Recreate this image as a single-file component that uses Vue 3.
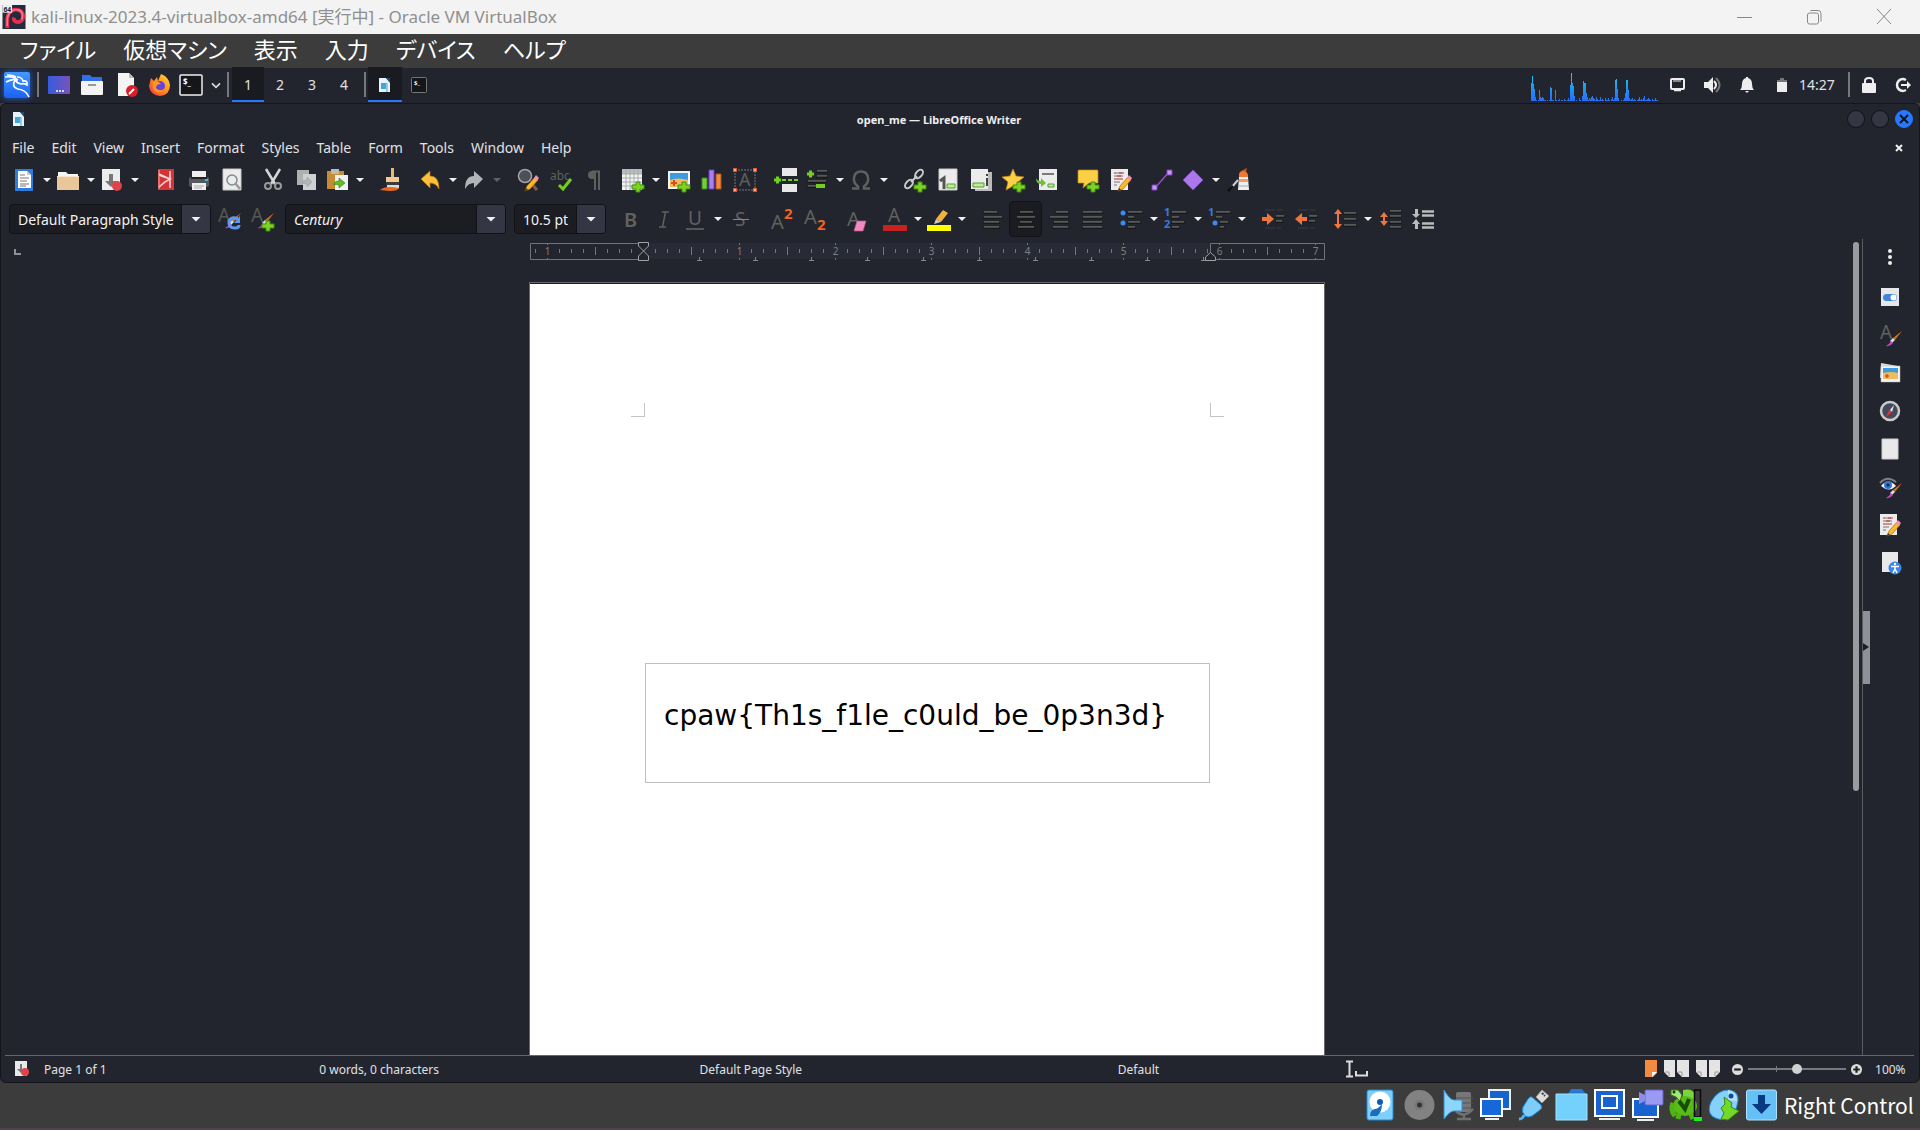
<template>
  <div class="screen">
    <header class="vm-title">
      <svg class="i24" viewBox="0 0 24 25" v-html="art.debian"></svg>
      <span class="vm-name">kali-linux-2023.4-virtualbox-amd64 [実行中] - Oracle VM VirtualBox</span>
      <div class="vm-controls">
        <button v-for="c in vmControls" :key="c" :aria-label="c">
          <svg class="i20" viewBox="0 0 20 20" v-html="art[c]"></svg>
        </button>
      </div>
    </header>

    <nav class="vm-menu">
      <button v-for="m in vmMenus" :key="m">{{ m }}</button>
    </nav>

    <div class="panel">
      <button class="kali" aria-label="Applications">
        <svg viewBox="0 0 26 26" v-html="art.kali"></svg>
      </button>
      <i class="bar"></i>
      <div class="launchers">
        <button v-for="l in launchers" :key="l" :aria-label="l">
          <svg class="i24" viewBox="0 0 24 24" v-html="art[l]"></svg>
        </button>
        <button class="more" aria-label="More terminals">
          <svg viewBox="0 0 10 10" width="8" height="8"><path d="M0 3l5 5 5-5" fill="none" stroke="#ddd" stroke-width="2" /></svg>
        </button>
      </div>
      <i class="bar"></i>
      <div class="spaces">
        <button v-for="n in 4" :key="n" :class="{ on: n === workspace }" @click="workspace = n">{{ n }}</button>
      </div>
      <i class="bar"></i>
      <div class="tasks">
        <button class="on" aria-label="open_me — LibreOffice Writer">
          <svg class="i16" viewBox="0 0 16 16" v-html="art.writer"></svg>
        </button>
        <button aria-label="Terminal">
          <svg class="i16" viewBox="0 0 16 16" v-html="art.miniTerm"></svg>
        </button>
      </div>
      <svg class="cpu" viewBox="0 0 128 28">
        <defs>
          <linearGradient id="cpuFill" x1="0" y1="0" x2="0" y2="28" gradientUnits="userSpaceOnUse">
            <stop offset="0" stop-color="#19d4f5" />
            <stop offset="0.5" stop-color="#1a9cf8" />
            <stop offset="1" stop-color="#2a6cf6" />
          </linearGradient>
        </defs>
        <rect v-for="(h, i) in load" :key="i" :x="i" :y="28 - h" width="1" :height="h" fill="url(#cpuFill)" />
      </svg>
      <div class="tray">
        <button v-for="t in tray" :key="t" :aria-label="t">
          <svg class="i20" viewBox="0 0 20 20" v-html="art[t]"></svg>
        </button>
      </div>
      <time class="clock">14:27</time>
      <i class="bar"></i>
      <div class="session">
        <button v-for="t in ['lock', 'logout']" :key="t" :aria-label="t">
          <svg class="i20" viewBox="0 0 20 20" v-html="art[t]"></svg>
        </button>
      </div>
    </div>

    <section class="window">
      <div class="titlebar">
        <svg class="i16" viewBox="0 0 16 16" v-html="art.writer"></svg>
        <h1>open_me — LibreOffice Writer</h1>
        <div class="win-controls">
          <button aria-label="Minimize"></button>
          <button aria-label="Maximize"></button>
          <button class="close" aria-label="Close">
            <svg viewBox="0 0 8 8" width="8" height="8"><path d="M0 0l8 8M8 0l-8 8" stroke="#10131c" stroke-width="2" /></svg>
          </button>
        </div>
      </div>

      <nav class="menubar">
        <button v-for="m in menus" :key="m">{{ m }}</button>
        <button class="doc-close" aria-label="Close document">
          <svg viewBox="0 0 8 8" width="8" height="8"><path d="M1 1l6 6M7 1l-6 6" stroke="#eee" stroke-width="2" /></svg>
        </button>
      </nav>

      <div class="toolbar standard">
        <template v-for="(t, i) in standard" :key="i">
          <i v-if="t === '|'" class="sep"></i>
          <button v-else class="tool" :class="{ split: t.endsWith('+') }" :aria-label="name(t)">
            <svg class="i24" viewBox="0 0 24 24" v-html="art[name(t)]"></svg>
            <b v-if="t.endsWith('+')" class="arrow" :class="{ dim: t === 'redo+' }"></b>
          </button>
        </template>
      </div>

      <div class="toolbar formatting">
        <div class="combo style-box">
          <select aria-label="Paragraph style"><option>Default Paragraph Style</option></select>
          <span><b class="arrow big"></b></span>
        </div>
        <button class="tool" aria-label="Update style"><svg class="i24" viewBox="0 0 24 24" v-html="art.updateStyle"></svg></button>
        <button class="tool" aria-label="New style"><svg class="i24" viewBox="0 0 24 24" v-html="art.newStyle"></svg></button>
        <div class="combo font-box">
          <select aria-label="Font name"><option>Century</option></select>
          <span><b class="arrow big"></b></span>
        </div>
        <div class="combo size-box">
          <select aria-label="Font size"><option>10.5 pt</option></select>
          <span><b class="arrow big"></b></span>
        </div>
        <template v-for="(t, i) in formatting" :key="i">
          <i v-if="t === '|'" class="sep"></i>
          <button v-else class="tool" :class="{ split: t.endsWith('+'), pressed: t === 'alignCenter' }" :aria-label="name(t)">
            <svg class="i24" viewBox="0 0 24 24" v-html="art[name(t)]"></svg>
            <b v-if="t.endsWith('+')" class="arrow"></b>
          </button>
        </template>
      </div>

      <div class="workspace">
        <div class="canvas">
          <div class="ruler-row">
            <svg class="tab-kind" viewBox="0 0 7 6"><path d="M1 0V5H7" fill="none" stroke="#8d8f93" stroke-width="2" /></svg>
            <svg class="ruler" viewBox="0 0 796 20">
              <rect x="114" y="1" width="567" height="16" fill="#282b35" />
              <path d="M114 1.500H1.500V17.500H114M681.500 17.500H795.500V1.500H681.500V17" fill="none" stroke="#707279" />
              <path :d="ticks" stroke="#75777d" />
              <path :d="tabs" stroke="#85878c" />
              <text v-for="n in rulerNumbers" :key="n.x" :x="n.x" y="13">{{ n.label }}</text>
              <path d="M109.500 .5H119.500V4L109.500 14V18.500H119.500V14L109.500 4Z" fill="#23252e" stroke="#a0a1a5" />
              <path d="M676.500 18.500H686.500V15L681.500 10.500L676.500 15Z" fill="#23252e" stroke="#a0a1a5" />
            </svg>
          </div>
          <article class="page">
            <div class="marks"><i></i><i></i></div>
            <div class="frame"><p>cpaw{Th1s_f1le_c0uld_be_0p3n3d}</p></div>
          </article>
        </div>
        <div class="scroll"><div class="thumb"></div></div>
        <aside class="sidebar">
          <button class="handle" aria-label="Hide sidebar">
            <svg viewBox="0 0 6 8" width="6" height="8"><path d="M0 0L6 4L0 8Z" fill="#1d1f26" /></svg>
          </button>
          <div class="decks">
            <button v-for="d in decks" :key="d" :aria-label="d">
              <svg class="i24" viewBox="0 0 24 24" v-html="art[d]"></svg>
            </button>
          </div>
        </aside>
      </div>

      <footer class="status">
        <svg class="i16" viewBox="0 0 16 16" v-html="art.modified"></svg>
        <span class="s-page">Page 1 of 1</span>
        <span class="s-words">0 words, 0 characters</span>
        <span class="s-style">Default Page Style</span>
        <span class="s-lang">Default</span>
        <svg class="s-mode" viewBox="0 0 22 18"><path d="M0 1.500H7M0 16.500H7M3.500 1V17" stroke="#ddd" stroke-width="2" /><path d="M10 11V15.500H21V11" fill="none" stroke="#ddd" stroke-width="2" /></svg>
        <div class="views">
          <button aria-label="Single page"><svg width="12" height="18" viewBox="0 0 12 18"><path d="M0 0H12V13L8 17H0Z" fill="#f48a41" /><path d="M12 12L7 17V12Z" fill="#fff" /></svg></button>
          <button aria-label="Multiple pages"><svg width="25" height="18" viewBox="0 0 25 18"><path d="M0 0H11V17H5L0 12ZM13 0H25V17H18L13 12Z" fill="#e4e4e4" /><path d="M1 12H5V16M14 12H18V16" stroke="#999" fill="none" /></svg></button>
          <button aria-label="Book view"><svg width="24" height="18" viewBox="0 0 24 18"><path d="M0 0H11V17H5L0 12ZM13 0H24V12L19 17H13Z" fill="#e4e4e4" /><path d="M1 12H5V16M23 12H19V16" stroke="#999" fill="none" /></svg></button>
        </div>
        <button class="zoom-btn" aria-label="Zoom out"><svg viewBox="0 0 10 10"><circle cx="5" cy="5" r="5" fill="#ddd" /><path d="M2 5H8" stroke="#222" stroke-width="2" /></svg></button>
        <input v-model="zoom" class="zoom" type="range" min="0" max="100" aria-label="Zoom" />
        <button class="zoom-btn" aria-label="Zoom in"><svg viewBox="0 0 10 10"><circle cx="5" cy="5" r="5" fill="#ddd" /><path d="M2 5H8M5 2V8" stroke="#222" stroke-width="2" /></svg></button>
        <span class="s-zoom">100%</span>
      </footer>
    </section>

    <footer class="vm-status">
      <button v-for="d in devices" :key="d" :aria-label="d">
        <svg viewBox="0 0 31 32" v-html="art[d]"></svg>
      </button>
      <span>Right Control</span>
    </footer>
  </div>
</template>

<script setup>
import { ref } from "vue";

const workspace = ref(1);
const zoom = ref(50);

const vmControls = ["minimize", "restore", "closeVm"];
const vmMenus = ["ファイル", "仮想マシン", "表示", "入力", "デバイス", "ヘルプ"];
const launchers = ["desktop", "files", "editor", "firefox", "terminal"];
const tray = ["network", "volume", "bell", "battery"];
const menus = ["File", "Edit", "View", "Insert", "Format", "Styles", "Table", "Form", "Tools", "Window", "Help"];
const decks = ["dots", "properties", "styles", "gallery", "navigator", "pageDeck", "inspector", "trackChanges", "a11y"];
const devices = ["hdd", "disc", "audio", "nic", "usb", "shared", "display", "record", "cpu", "mouse", "hostkey"];

// a trailing + marks a button with a drop-down arrow
const standard = [
  "newDoc+", "open+", "save+", "|", "pdf", "print", "preview", "|", "cut", "copy", "paste+", "|",
  "brush", "|", "undo+", "redo+", "|", "find", "spell", "pilcrow", "|", "table+", "image", "chart",
  "textbox", "|", "pageBreak", "field+", "omega+", "|", "link", "footnote", "endnote", "bookmark",
  "crossref", "|", "comment", "trackChanges", "|", "line", "shapes+", "drawTools",
];
const formatting = [
  "bold", "italic", "underline+", "strike", "|", "superscript", "subscript", "|", "clear", "|",
  "fontColor+", "highlight+", "|", "alignLeft", "alignCenter", "alignRight", "justify", "|",
  "bullets+", "numbering+", "outline+", "|", "indent", "outdent", "|", "spacing+", "paraMore", "paraLess",
];
const name = (t) => t.replace("+", "");

// cpu graph, one value per pixel column
const load = [
  18, 25, 17, 12, 4, 1, 0, 1, 11, 4, 3, 4, 3, 1, 1, 0, 1, 0, 1, 14, 13, 1, 1, 0, 11, 1, 0, 1, 2, 0,
  1, 1, 0, 2, 1, 0, 1, 3, 1, 16, 28, 18, 15, 5, 0, 1, 0, 0, 3, 1, 0, 5, 20, 18, 18, 8, 4, 1, 3, 2,
  4, 5, 3, 2, 1, 4, 2, 1, 1, 4, 1, 2, 1, 0, 3, 1, 1, 3, 1, 0, 2, 4, 1, 3, 21, 22, 12, 3, 0, 0, 1, 0,
  1, 3, 8, 21, 21, 11, 3, 1, 2, 3, 1, 2, 1, 0, 1, 2, 4, 1, 2, 1, 3, 5, 1, 1, 2, 3, 2, 1, 0, 2, 1, 1, 3, 1, 1, 0,
];

const zero = 114;
let ticks = "";
const rulerNumbers = [];
for (let i = -9; i <= 56; i++) {
  if (i === 0) continue;
  const x = zero + i * 12 + 0.5;
  if (i % 8 === 0) {
    ticks += `M${x} 1v2M${x} 16v2`;
    rulerNumbers.push({ x: x, label: Math.abs(i / 8) });
  } else if (i % 4 === 0) {
    ticks += `M${x} 5v8`;
  } else {
    ticks += `M${x} 7v4`;
  }
}
let tabs = "";
for (let i = 1; i <= 10; i++) {
  const x = zero + i * 56 + 0.5;
  tabs += `M${x} 15v3M${x - 2.5} 18.5h5`;
}

const plus = '<path d="M15 14h4v3h4v4h-4v3h-4v-3h-4v-4h4z" fill="#7ed321" stroke="#3c9010"/>';
const sheet = '<path d="M3 1h18v21H3z" fill="#ececec" stroke="#c9c9c9"/>';
const pencil = '<path d="M9 23l2-5 8-9 3 3-8 9z" fill="#fbb92e" stroke="#a8660c" stroke-width=".7"/><path d="M18 10l2-3 3 3-2 3z" fill="#f48fb1"/><path d="M9 23l1-3 2 2z" fill="#333"/>';
const brushTip = '<path d="M23 6l-7 9-2-2z" fill="#d0701c"/><path d="M16 15l-2-2-3 3 2 2z" fill="#ddd"/><path d="M12 16l2 2q-3 4-7 3 3-1 5-5z" fill="#c247c0"/>';
const letter = (t, x, y, size, fill, extra = "") =>
  `<text x="${x}" y="${y}" font-size="${size}" fill="${fill}" font-family="Noto Sans, sans-serif" ${extra}>${t}</text>`;
const rules = (list, color = "#65675f") =>
  list.map(([x, y, w]) => `<path d="M${x} ${y}h${w}" stroke="${color}" stroke-width="1.6"/><path d="M${x - 1} ${y + 1.3}h${w + 2}" stroke="#15161a"/>`).join("");

const art = {
  debian: '<path d="M0 0h24v25H0z" fill="#242b3b"/><path d="M5 24V16C5 7 11 4 16 5c6 1 7 9 3 12-4 2-8 0-7-4" fill="none" stroke="#e62f50" stroke-width="4"/><path d="M5 22V16C5 8 11 4 16 5c5 1 6 6 4 10" fill="none" stroke="#ff7f90" stroke-width="1.500"/><path d="M0 0h10v8H0z" fill="#eee"/>' + letter("64", 1, 7, 7, "#222", 'font-weight="700"'),
  minimize: '<path d="M2 10.500h15" stroke="#888"/>',
  restore: '<rect x="2.500" y="6" width="11" height="11" rx="2" fill="none" stroke="#888"/><path d="M5.500 3.500h7.500q3 0 3 3v8" fill="none" stroke="#888"/>',
  closeVm: '<path d="M2 2l14 15M16 2L2 17" stroke="#888"/>',
  kali: '<defs><linearGradient id="kaliBg" x2="0" y2="1"><stop stop-color="#4399ff"/><stop offset="1" stop-color="#1b61f2"/></linearGradient></defs><rect width="26" height="26" rx="2" fill="url(#kaliBg)"/><path d="M1 5q7-1 12 2M2 10q7-4 12-2M3 3q6 0 9 2M13 5q5 0 6 4 5-1 4 4-3-2-6-1-5-1-6-5M11 8q-4 7 3 9 8 1 11 8" fill="none" stroke="#fff" stroke-width="1.6"/>',
  desktop: '<defs><linearGradient id="desk"><stop stop-color="#355ce0"/><stop offset="1" stop-color="#7a52b8"/></linearGradient></defs><rect x="1" y="3" width="22" height="18" rx="1" fill="url(#desk)"/><path d="M9 18h2m1 0h2m1 0h2" stroke="#fff" stroke-width="1.5"/>',
  files: '<path d="M2 2h8l2 2h10v6H2z" fill="#2f6fe8"/><rect x="1" y="8" width="22" height="14" rx="1" fill="#f3f3f3"/><path d="M8 12h8" stroke="#999" stroke-width="2"/>',
  editor: '<path d="M5 0h11l5 5v18H5z" fill="#f4f4f4"/><path d="M16 0v5h5z" fill="#bbb"/><circle cx="19" cy="18" r="6" fill="#d81f2a"/><path d="M16 21l5-5" stroke="#fff" stroke-width="2"/>',
  firefox: '<defs><linearGradient id="fox" x1="1" x2="0" y2="1"><stop stop-color="#ffdf3a"/><stop offset=".5" stop-color="#ff8a1e"/><stop offset="1" stop-color="#f0304a"/></linearGradient></defs><path d="M4 9l1-4 3 3 3-4 1 4 3-7q8 3 9 11 0 10-10 11Q4 22 3 13z" fill="url(#fox)"/><circle cx="14" cy="13" r="5" fill="#6b42d8"/><path d="M7 9q5-2 8 2-5 0-5 4 3 4 8 1-3 5-8 3-5-4-3-10z" fill="#ff9a20"/>',
  terminal: '<rect x="1" y="2" width="22" height="20" rx="1" fill="#151619" stroke="#eee" stroke-width="1.500"/>' + letter("$_", 4, 12, 8, "#fff", 'font-weight="700"'),
  miniTerm: '<rect x=".5" y=".5" width="15" height="15" rx="1" fill="#151619" stroke="#777"/>' + letter("$_", 3, 8, 6, "#fff", 'font-weight="700"'),
  writer: '<path d="M2 1h7l4 4v10H2z" fill="#e8f4fb"/><path d="M9 1h4v5z" fill="#1d4b7c"/><rect x="4" y="6" width="6" height="6" fill="#42a5dc"/><path d="M11 6v9H9V7z" fill="#8ccbee"/>',
  network: '<rect x="4" y="4" width="13" height="10" rx="1" fill="none" stroke="#eee" stroke-width="2"/><path d="M7 4v3M9 4v3M11 4v3M13 4v3" stroke="#eee"/><path d="M7 15.500h7" stroke="#eee" stroke-width="1.500"/>',
  volume: '<path d="M2 7h4l5-5v16l-5-5H2z" fill="#eee"/><path d="M12 6q4 4 0 8" fill="none" stroke="#eee" stroke-width="2"/><path d="M14 3q7 7 0 14" fill="none" stroke="#777" stroke-width="2"/>',
  bell: '<path d="M3 15q2-2 2-6 0-5 4-6V2h2v1q4 1 4 6 0 4 2 6z" fill="#eee"/><path d="M8 16h4l-2 2z" fill="#eee"/>',
  battery: '<path d="M8 3h4v2h3v2H5V5h3z" fill="#777"/><path d="M5 7h10v10H5z" fill="#eee"/>',
  lock: '<rect x="3" y="8" width="14" height="10" rx="1" fill="#eee"/><path d="M6 9V6q0-3 4-3t4 3v3" fill="none" stroke="#eee" stroke-width="2"/>',
  logout: '<path d="M13 5q-2-1-3-1a6 6 0 100 12q1 0 3-1" fill="none" stroke="#eee" stroke-width="2.500"/><path d="M8 9h6V6l4 4-4 4v-3H8z" fill="#eee"/>',

  newDoc: '<path d="M3 1h18v22H3z" fill="#2f7cdc"/><path d="M6 3h9l4 4v13H6z" fill="#fff"/><path d="M15 3v4h4" fill="#ccc"/><path d="M8 7h5M8 10h9M8 13h7M8 16h9M8 18h6" stroke="#777"/>',
  open: '<path d="M2 4h8l2 2h10v7H2z" fill="#f4f4f4"/><path d="M1 8h22v14H1z" fill="#e8c79b"/><path d="M1 8.500h22" stroke="#f8e4c6"/>',
  save: '<path d="M2 1h18v21H2z" fill="#ececec"/><path d="M9 6h4v7h4l-6 6-6-6h4z" fill="#777"/><circle cx="17" cy="18" r="5" fill="#e0434b"/>',
  pdf: '<path d="M4 1h16v21H4z" fill="#d43438"/><path d="M5 6l11 5V3M16 11v9M5 7q8 3 11 4Q10 14 5 19" fill="none" stroke="#f7d4d4" stroke-width="1.500"/><path d="M5 2v19" stroke="#f3a8a8"/>',
  print: '<path d="M5 3h14v7H5z" fill="#eee"/><rect x="2" y="9" width="20" height="10" rx="2" fill="#55585d"/><path d="M4 10h16" stroke="#222" stroke-width="2"/><path d="M5 15h14v7H5z" fill="#eee"/><path d="M7 18h10M7 20h8" stroke="#aaa"/><path d="M18 12h3" stroke="#22c5f4" stroke-width="2"/>',
  preview: sheet + '<circle cx="12" cy="12" r="5" fill="#e8eef0" stroke="#888" stroke-width="1.500"/><path d="M15 15l5 6" stroke="#9a9a9a" stroke-width="2.500"/>',
  cut: '<path d="M5 1l9 15M19 1l-9 15" stroke="#d5d5d5" stroke-width="2.500"/><circle cx="7" cy="18" r="3" fill="none" stroke="#999" stroke-width="2"/><circle cx="17" cy="18" r="3" fill="none" stroke="#999" stroke-width="2"/>',
  copy: '<path d="M3 2h12v15H3z" fill="#aeb0b2"/><path d="M9 6h13v16H9z" fill="#cfd0d1"/><path d="M8 15q0-3 5-3V9l5 5-5 5v-3q-3 0-5-1z" fill="#b2b5b7" stroke="#999" stroke-width=".5"/>',
  paste: '<path d="M2 3h17v18H2z" fill="#c58c33"/><rect x="6" y="1" width="8" height="5" fill="#bbb"/><path d="M10 7h13v15H10z" fill="#f1f1f1"/><path d="M9 17q0-4 5-4v-3l6 5-6 5v-3q-3-1-5 0z" fill="#62bd26" stroke="#2c7d10" stroke-width=".6"/>',
  brush: '<path d="M12 0h3v9h-3z" fill="#e9b96e"/><path d="M7 9h13v5H7z" fill="#f0ca8e"/><path d="M7 14h13v3H7z" fill="#3a3c40"/><path d="M8 17h12v3H8z" fill="#ddd"/><path d="M1 22q5-5 19-2-1 3-9 3z" fill="#ea6a1c"/>',
  undo: '<path d="M3 11l9-8v5q9 0 9 13-3-6-9-6v5z" fill="#fbbf3a" stroke="#b8780c" stroke-width=".7"/>',
  redo: '<path d="M21 11l-9-8v5q-9 0-9 13 3-6 9-6v5z" fill="#b2b5b7"/>',
  find: '<circle cx="9" cy="8" r="6.500" fill="#4b4f58" stroke="#a0a3a6" stroke-width="1.500"/><path d="M15 15l6 7" stroke="#7d6050" stroke-width="3"/>' + pencil,
  spell: letter("abc", 1, 12, 12, "#5e605c") + '<path d="M10 17l4 4 8-10" fill="none" stroke="#72cf1e" stroke-width="3"/>',
  pilcrow: '<path d="M18 3.500H10M13 3v19M17 3v19" fill="none" stroke="#5e605c" stroke-width="2"/><path d="M13 3h-3a4 4 0 000 8h3z" fill="#5e605c"/>',
  table: '<path d="M1 1h20v21H1z" fill="#f4f4f4"/><path d="M1 1h20v5H1z" fill="#b9bbbc"/><path d="M1 6h20M1 10h20M1 14h20M1 18h20M5 1v21M9 1v21M13 1v21M17 1v21" stroke="#a9abac"/>' + plus,
  image: '<path d="M1 3h22v18H1z" fill="#f4f4f4"/><path d="M3 5h18v8H3z" fill="#3d9be0"/><path d="M3 12q8-3 18 0v7H3z" fill="#efbb5c"/><path d="M7 12v6M4 15h6" stroke="#d8501c" stroke-width="2"/>' + plus,
  chart: '<path d="M2 10h5v11H2z" fill="#72cf3a" stroke="#3f8c18"/><path d="M9 2h5v19H9z" fill="#ab80f0" stroke="#6f42bd"/><path d="M16 6h5v15h-5z" fill="#f08a3e" stroke="#b3530f"/>',
  textbox: '<path d="M2 2h20v20H2z" fill="none" stroke="#76787c" stroke-dasharray="2 1"/>' + letter("A", 6, 18, 18, "#5e605c") + '<path d="M0 0h4v4H0zM20 0h4v4h-4zM0 20h4v4H0zM20 20h4v4h-4z" fill="#e0562a"/><path d="M1 1h2v2H1zM21 1h2v2h-2zM1 21h2v2H1zM21 21h2v2h-2z" fill="#f5b09a"/>',
  pageBreak: '<path d="M8 0h15v8H8zM8 16h15v8H8z" fill="#e8e8e8"/><path d="M8 12h16" stroke="#72cf1e" stroke-width="2" stroke-dasharray="4 2"/><path d="M0 12h7M3.500 8.500v7" stroke="#72cf1e" stroke-width="3"/>',
  field: '<path d="M2 6h7M5.500 2.500v7" stroke="#72cf1e" stroke-width="3"/>' + rules([[12, 3, 10], [12, 8, 10], [3, 13, 18], [3, 18, 8]]) + '<path d="M11 16h9v4h-9z" fill="#72cf1e"/>',
  omega: '<path d="M3 20.500h6v-2q-5-4-4-9 1-6 7-6t7 6q1 5-4 9v2h6" fill="none" stroke="#60625e" stroke-width="2.500"/>',
  link: '<g fill="none" stroke="#c9cbcc" stroke-width="2"><ellipse cx="16" cy="6" rx="3" ry="5" transform="rotate(40 16 6)"/><ellipse cx="6" cy="16" rx="3" ry="5" transform="rotate(40 6 16)"/><path d="M8 14l6-6"/></g>' + plus,
  footnote: sheet + '<path d="M4 13l4-3v11" fill="none" stroke="#555" stroke-width="3"/><path d="M11 16h8v4h-8z" fill="#bfeaa0" stroke="#51a326"/>',
  endnote: '<path d="M6 4h17v19H6z" fill="#bbb"/><path d="M2 1h17v20H2z" fill="#ececec"/><path d="M4 15h11v4H4z" fill="#bfeaa0" stroke="#51a326"/><path d="M18 10v8M18 6v2" stroke="#444" stroke-width="2"/>',
  bookmark: '<path d="M11 1l3 7 8 1-6 5 2 8-7-4-7 4 2-8-6-5 8-1z" fill="#fbcf46" stroke="#c18d10" stroke-width=".7"/>' + plus,
  crossref: '<path d="M4 1h18v21H4z" fill="#ececec"/><path d="M7 6h12" stroke="#555" stroke-width="1.500"/><path d="M13 16h6v3h-6z" fill="#bfeaa0" stroke="#51a326"/><path d="M1 10q1 3 5 3v-3l5 5-5 4v-3q-5 0-5-6z" fill="#72bd3a"/>',
  comment: '<path d="M3 2h18q1 0 1 1v12h-9l-6 5 1-5H2V3q0-1 1-1z" fill="#fbcf46" stroke="#c18d10" stroke-width=".7"/>' + plus,
  trackChanges: '<path d="M2 1h17v21H2z" fill="#ececec"/><path d="M7 5h6M5 8h9M5 14h6M5 17h3" stroke="#777"/><path d="M5 5h2M10 5h5M8 8h4M5 11h9" stroke="#b5302c"/>' + pencil,
  line: '<path d="M5 20L19 4" stroke="#8b50c8" stroke-width="1.500"/><path d="M2 17h5v5H2zM17 2h5v5h-5z" fill="#c79af2" stroke="#8044c2"/>',
  shapes: '<path d="M12 2l10 10-10 10L2 12z" fill="#ab77ea" stroke="#8448cc" stroke-width=".7"/>',
  drawTools: '<path d="M14 3l6-3-1 4z" fill="#c85416"/><path d="M12 7q0-4 4-4t5 4v2h-9z" fill="#ef7634"/><path d="M12 9h9l1 13H11z" fill="#eee"/><path d="M12 11h9v3h-9z" fill="#ef9d66"/><path d="M11 12L4 20" stroke="#ccc" stroke-width="2"/><path d="M1 23l5-5" stroke="#111" stroke-width="2.500"/><path d="M11 18h11" stroke="#aaa"/>',

  updateStyle: letter("A", 0, 15, 19, "#555753") + brushTip + '<path d="M20 12q-6-3-9 2-1 7 6 7 4 0 4-3" fill="none" stroke="#5b9af0" stroke-width="3"/><path d="M22 9v7h-6z" fill="#5b9af0"/>',
  newStyle: letter("A", 0, 15, 19, "#555753") + brushTip + plus,
  bold: letter("B", 5, 20, 20, "#60625e", 'font-weight="600"'),
  italic: '<path d="M10 5h7M7 20h7M13.500 5l-3 15" stroke="#60625e" stroke-width="1.500"/>',
  underline: letter("U", 5, 18, 19, "#60625e") + '<path d="M3 22h18" stroke="#888"/>',
  strike: letter("S", 6, 19, 19, "#60625e") + '<path d="M4 12.500h16" stroke="#888"/>',
  superscript: letter("A", 1, 22, 20, "#60625e") + letter("2", 14, 12, 15, "#f0641e", 'font-weight="700"'),
  subscript: letter("A", 1, 17, 20, "#60625e") + letter("2", 14, 23, 15, "#f0641e", 'font-weight="700"'),
  clear: letter("A", 3, 19, 20, "#60625e") + '<path d="M13 14h9l-3 10h-9z" fill="#f08bc0" stroke="#c4558f" stroke-width=".7"/>',
  fontColor: letter("A", 5, 15, 19, "#60625e") + '<path d="M0 18h24v6H0z" fill="#c9211e"/>',
  highlight: '<path d="M9 12l7-9 5 3-7 9z" fill="#f2b33c"/><path d="M9 12l5 3-7 2z" fill="#ccc"/><path d="M0 18h24v6H0z" fill="#ff0"/>',
  alignLeft: rules([[3, 5, 13], [3, 10, 18], [3, 15, 15], [3, 20, 15]]),
  alignCenter: rules([[6, 5, 13], [3, 10, 18], [6, 15, 12], [4, 20, 16]]),
  alignRight: rules([[9, 5, 12], [3, 10, 18], [7, 15, 14], [6, 20, 15]]),
  justify: rules([[3, 5, 19], [3, 10, 19], [3, 15, 19], [3, 20, 19]]),
  bullets: '<circle cx="4" cy="6" r="2.500" fill="#3b8cf0"/><circle cx="4" cy="16" r="2.500" fill="#3b8cf0"/>' + rules([[9, 5, 14], [9, 10, 6], [9, 15, 12], [9, 20, 7]]),
  numbering: letter("1", 1, 9, 11, "#3b78d8", 'font-weight="700"') + letter("2", 1, 21, 11, "#3b78d8", 'font-weight="700"') + rules([[9, 5, 14], [9, 10, 7], [9, 15, 12], [9, 20, 7]]),
  outline: letter("1", 1, 9, 11, "#3b78d8", 'font-weight="700"') + '<circle cx="8" cy="16" r="2.500" fill="#3b8cf0"/>' + rules([[9, 5, 14], [9, 10, 6], [13, 15, 8], [13, 20, 4]]),
  indent: '<path d="M1 10h5V6l7 6-7 6v-4H1z" fill="#f0753a"/>' + rules([[15, 9, 8], [15, 14, 6]]) + '<path d="M4 3h10m2 0h6M4 21h10m2 0h4" stroke="#3a3c43"/>',
  outdent: '<path d="M13 10H8V6l-7 6 7 6v-4h5z" fill="#f0753a"/>' + rules([[15, 9, 8], [15, 14, 6]]) + '<path d="M4 3h10m2 0h6M4 21h10m2 0h4" stroke="#3a3c43"/>',
  spacing: '<path d="M5 2l4 5H6v10h3l-4 5-4-5h3V7H1z" fill="#f0753a"/>' + rules([[11, 6, 12], [11, 12, 12], [11, 18, 12]]),
  paraMore: '<path d="M5 5l4 5H6v4h3l-4 5-4-5h3v-4H1z" fill="#f0753a"/>' + rules([[11, 4, 11], [11, 9, 11], [11, 15, 11], [11, 20, 11]]),
  paraLess: '<path d="M4 11l4-4H6V2H3v5H0zM4 12l4 5H6v5H3v-5H0z" fill="#bbb"/><path d="M10 4.500h12M10 8.500h12M10 16.500h12M10 20.500h12" stroke="#bbb" stroke-width="2.500"/>',

  dots: '<circle cx="12" cy="6" r="2" fill="#eee"/><circle cx="12" cy="12" r="2" fill="#eee"/><circle cx="12" cy="18" r="2" fill="#eee"/>',
  properties: '<path d="M3 3h18v18H3z" fill="#e6e7e8"/><rect x="5" y="9" width="14" height="7" rx="3.500" fill="#3f83dc"/><circle cx="15.500" cy="12.500" r="3" fill="#fff"/>',
  styles: letter("A", 2, 16, 19, "#60625e") + '<g transform="translate(1 2)">' + brushTip + "</g>",
  gallery: '<path d="M3 2l17 3-1 4-17 8z" fill="#ddd"/><path d="M3 5h19v16H3z" fill="#f4f4f4" stroke="#bbb" stroke-width=".5"/><path d="M5 7h15v6H5z" fill="#3d9be0"/><path d="M5 12q8-2 15 0v6H5z" fill="#efbb5c"/><path d="M9 13v4M7 15h4" stroke="#d8501c" stroke-width="1.500"/>',
  navigator: '<circle cx="12" cy="12" r="9" fill="#434a5c" stroke="#c9cbcc" stroke-width="2.500"/><path d="M16 6l-2 7-2-2z" fill="#eee"/><path d="M8 18l3-7 3 2z" fill="#e03434"/>',
  pageDeck: '<path d="M4 2h16v20H4z" fill="#e9e9e9" stroke="#ccc"/>',
  inspector: '<path d="M3 11q7-9 15 0-7 7-15 0z" fill="#f2f2f2"/><circle cx="10" cy="10" r="4" fill="#3474d2"/><circle cx="10" cy="10" r="1.500" fill="#123"/><path d="M2 8q7-8 16-1" fill="none" stroke="#7c8084" stroke-width="2"/><g transform="translate(1 2)">' + brushTip + "</g>",
  a11y: '<path d="M4 1h16v20H4z" fill="#e9e9e9"/><circle cx="17" cy="17" r="6.500" fill="#3987e6"/><circle cx="17" cy="13" r="1.200" fill="#fff"/><path d="M13 15.500h8M17 15v3l-2 4M17 18l2 4" fill="none" stroke="#fff" stroke-width="1.500"/>',
  modified: '<path d="M1 0h12v15H1z" fill="#e9e9e9"/><path d="M6 3h2v5h3l-4 4-4-4h3z" fill="#777"/><circle cx="11" cy="11" r="4" fill="#e0434b"/>',

  hdd: '<rect x="1" y="1" width="26" height="30" rx="2" fill="#7ed0fa" stroke="#1d8cdc"/><circle cx="14" cy="13" r="10.500" fill="#fff"/><circle cx="14" cy="13" r="3" fill="#0b5cb8"/><path d="M16 15q0 8-5 12H4q0-6 5-7 3 0 7-5z" fill="#1b6dbb"/>',
  disc: '<circle cx="15.500" cy="16" r="15" fill="#828282"/><circle cx="15.500" cy="16" r="5" fill="#777"/><circle cx="15.500" cy="16" r="2.500" fill="#333"/>',
  audio: '<rect x="14" y="3" width="15" height="20" rx="2" fill="#777"/><path d="M14 9h17M14 14h17M14 19h17" stroke="#555"/><path d="M14 22q8 8 17-2M22 26v4M15 30h14" fill="none" stroke="#707070" stroke-width="2.500"/><path d="M2 1q6 10 10 10h8v11h-8Q8 22 2 30z" fill="#8cd6fa" stroke="#318fdc"/>',
  nic: '<path d="M9 1h21v19H9z" fill="#1563cf" stroke="#e9f0f8" stroke-width="2"/><path d="M1 10h21v17H1z" fill="#1668d8" stroke="#fff" stroke-width="2"/><path d="M5 30h14" stroke="#eee" stroke-width="2"/>',
  usb: '<path d="M18 8l6-7 7 6-7 7z" fill="#ddd" stroke="#999"/><path d="M24 4l3 3" stroke="#333" stroke-width="2" stroke-dasharray="2 1"/><path d="M14 8l9 8q2 3-1 5l-8 6q-4 2-7 0-4-4-2-9l5-8q2-3 4-2z" fill="#7dccfa" stroke="#1886da"/><path d="M6 26q-1 4-5 4" fill="none" stroke="#55b1f2" stroke-width="3"/>',
  shared: '<path d="M12 5l3-5h11l4 5v5H12z" fill="#2379d4"/><path d="M0 5h31v26H0z" fill="#74d1fb" stroke="#a3e3ff"/>',
  display: '<path d="M1 1h29v26H1z" fill="#1863d0" stroke="#fff" stroke-width="2"/><path d="M8 7h15v12H8z" fill="none" stroke="#fff" stroke-width="2"/><path d="M5 30h21" stroke="#eee" stroke-width="2"/>',
  record: '<path d="M1 10h25v18H1z" fill="#1863d0" stroke="#fff" stroke-width="2"/><path d="M5 31h17" stroke="#eee" stroke-width="2"/><rect x="13" y="1" width="18" height="15" rx="1" fill="#9a9af2" stroke="#6464c8"/><path d="M7 3l6 3v6l-6 3z" fill="#8d8de8"/>',
  cpu: '<path d="M13 1q9-2 12 4v6H13z" fill="#79d63a"/><ellipse cx="15" cy="17" rx="12" ry="10" fill="#59ba18"/><path d="M1 1l7 0 4 5-2 6-4-4-5-2z" fill="#a5e57a" stroke="#2c7d10"/><path d="M3 14q-3 7 2 13M9 25l-1 5M21 25l2 5" fill="none" stroke="#4fb414" stroke-width="5"/><circle cx="4" cy="3" r="1.500" fill="#174000"/><path d="M9 12l6 8 4-10" fill="none" stroke="#174d07" stroke-width="4"/><path d="M24.500 1h6v27h-6z" fill="none" stroke="#0a0a0a" stroke-width="1.500"/><path d="M25 29h6v2h-6z" fill="#060" stroke="#19f019" stroke-width="2"/>',
  mouse: '<path d="M3 13Q10 0 22 1q9 2 8 11-2 14-11 18-8 2-15-3-5-5-1-14z" fill="#86d1fa" stroke="#1b8ce0"/><path d="M20 1q9 2 9 11l-9-1z" fill="#b6e3fb"/><circle cx="23" cy="7" r="2.500" fill="#124c94"/><path d="M16 8l8 6-1 4 8 4-11 9-7-1 3-6-3-5 4-4z" fill="#72da26" stroke="#358916"/>',
  hostkey: '<rect x=".5" y="1" width="30" height="30" rx="2" fill="#65c0f6" stroke="#b0e2ff"/><path d="M12 6h7v9h6l-9.500 10L6 15h6z" fill="#073a80"/>',
};
</script>

<style>
body {
  background: #3b3b3b;
}
</style>

<style scoped>
* {
  box-sizing: border-box;
}

.screen {
  display: flex;
  flex-direction: column;
  height: 100vh;
  overflow: hidden;
  background: #3b3c3b;
  color: #e0e1e3;
  font-family: "Noto Sans", "Noto Sans CJK JP", sans-serif;
  font-size: 14px;
}

button {
  display: flex;
  align-items: center;
  justify-content: center;
  flex: none;
  padding: 0;
  border: 0;
  background: none;
  color: inherit;
  font: inherit;
}

svg {
  display: block;
  flex: none;
  overflow: visible;
}

.i16 {
  width: 16px;
  height: 16px;
}

.i20 {
  width: 20px;
  height: 20px;
}

.i24 {
  width: 24px;
  height: 24px;
}

/* VirtualBox frame */
.vm-title {
  display: flex;
  align-items: center;
  flex: none;
  height: 34px;
  padding-left: 2px;
  gap: 5px;
  background: #f3f3f3;
  color: #8f8f8f;
}

.vm-name {
  flex: 1;
  font-family: "Noto Sans", "Noto Sans CJK JP", sans-serif;
  font-size: 17px;
  line-height: 34px;
}

.vm-controls {
  display: flex;
}

.vm-controls button {
  width: 70px;
  height: 34px;
}

.vm-menu {
  display: flex;
  align-items: center;
  flex: none;
  gap: 27px;
  height: 34px;
  padding: 0 0 6px 20px;
  color: #fff;
  font-family: "Noto Sans CJK JP", sans-serif;
  font-size: 22px;
  line-height: 32px;
  font-feature-settings: "palt";
}

/* Xfce panel */
.panel {
  display: flex;
  align-items: center;
  flex: none;
  height: 35px;
  padding: 0 7px 2px 4px;
  background: #23252e;
}

.bar {
  flex: none;
  width: 2px;
  height: 25px;
  background: #77787c;
}

.kali {
  width: 26px;
  height: 26px;
  margin-right: 7px;
  border-radius: 2px;
  box-shadow: 0 0 6px #1c62e0;
}

.kali svg {
  width: 26px;
  height: 26px;
}

.launchers {
  display: flex;
  align-items: center;
  gap: 9px;
  padding: 0 7px 0 8px;
}

.more {
  width: 8px;
}

.spaces {
  display: flex;
  padding: 0 4px 0 3px;
}

.spaces button {
  width: 32px;
  height: 35px;
}

.tasks {
  display: flex;
  flex: 1;
  padding-left: 2px;
}

.tasks button {
  width: 34px;
  height: 35px;
}

.spaces .on,
.tasks .on {
  background: #1a1b21;
  box-shadow: inset 0 -2px #2777ff;
}

.cpu {
  align-self: flex-end;
  width: 128px;
  height: 28px;
  margin-right: 8px;
}

.tray {
  display: flex;
  gap: 15px;
}

.clock {
  width: 36px;
  margin: 0 13px 0 7px;
  font-size: 14px;
}

.session {
  display: flex;
  gap: 14px;
  padding-left: 9px;
}

/* Writer window */
.window {
  display: flex;
  flex-direction: column;
  flex: 1;
  min-height: 0;
  border: 1px solid #14151a;
  border-radius: 6px;
  background: #23252e;
}

.titlebar {
  display: flex;
  align-items: center;
  flex: none;
  height: 30px;
  padding: 0 6px 0 10px;
}

.titlebar h1 {
  flex: 1;
  margin: 0;
  padding-left: 4px;
  font-size: 11px;
  font-weight: 700;
  text-align: center;
  color: #eee;
}

.win-controls {
  display: flex;
  gap: 6px;
}

.win-controls button {
  width: 18px;
  height: 18px;
  border: 1px solid #101116;
  border-radius: 50%;
  background: #343743;
}

.win-controls .close {
  border-color: #2777ff;
  background: #2777ff;
}

.menubar {
  display: flex;
  align-items: center;
  flex: none;
  gap: 17px;
  height: 27px;
  padding: 0 16px 0 11px;
}

.doc-close {
  margin-left: auto;
}

.toolbar {
  display: flex;
  align-items: center;
  flex: none;
}

.standard {
  height: 38px;
  padding-left: 8px;
}

.formatting {
  height: 40px;
  padding-left: 8px;
}

.tool {
  width: 33px;
  height: 36px;
}

.split {
  justify-content: flex-start;
  width: 44px;
  padding-left: 3px;
  gap: 7px;
}

.pressed {
  border: 1px solid #121318;
  border-radius: 4px;
  background: #1a1c22;
}

.sep {
  flex: none;
  width: 8px;
}

.arrow {
  width: 8px;
  height: 4px;
  background: #f0f0f0;
  clip-path: polygon(0 0, 100% 0, 50% 100%);
}

.arrow.dim {
  opacity: 0.3;
}

.arrow.big {
  width: 10px;
  height: 5px;
}

.combo {
  display: grid;
  grid-template-columns: 1fr 29px;
  flex: none;
  height: 30px;
  border: 1px solid #111217;
  border-radius: 4px;
  background: #1b1d23;
  overflow: hidden;
}

.combo select {
  grid-area: 1 / 1 / 2 / 3;
  padding: 0 0 0 8px;
  border: 0;
  background: none;
  appearance: none;
  color: #f2f2f2;
  font: inherit;
}

.combo span {
  display: flex;
  align-items: center;
  justify-content: center;
  grid-area: 1 / 2 / 2 / 3;
  border-left: 1px solid #111217;
  background: #343743;
  pointer-events: none;
}

.style-box {
  width: 202px;
  margin-right: 2px;
}

.font-box {
  width: 221px;
  margin: 0 8px 0 6px;
}

.font-box select {
  font-style: italic;
}

.size-box {
  width: 92px;
  margin-right: 8px;
}

.workspace {
  display: flex;
  flex: 1;
  min-height: 0;
  margin-right: 1px;
}

.canvas {
  display: flex;
  flex-direction: column;
  flex: 1;
  min-width: 0;
  padding-top: 3px;
  overflow: hidden;
}

.ruler-row {
  display: grid;
  grid-template-columns: 1fr 796px 1fr;
  align-items: center;
  flex: none;
  height: 20px;
}

.tab-kind {
  width: 7px;
  height: 6px;
  margin-left: 13px;
}

.ruler {
  grid-column: 2;
  width: 796px;
  height: 20px;
}

.ruler text {
  fill: #7d7f85;
  font-size: 10px;
  text-anchor: middle;
}

.page {
  flex: 1;
  align-self: center;
  width: 796px;
  margin-top: 20px;
  border: 1px solid #66676b;
  border-bottom: 0;
  background: #fff;
  box-shadow: inset 0 1px #1b1c21;
  color: #000;
}

.marks {
  display: flex;
  justify-content: space-between;
  padding: 120px 100px 0 101px;
}

.marks i {
  width: 14px;
  height: 14px;
  border: 1px solid #c4c4c4;
  border-width: 0 1px 1px 0;
}

.marks i:last-child {
  border-width: 0 0 1px 1px;
}

.frame {
  height: 120px;
  margin: 246px 114px 0 115px;
  padding: 29px 0 29px 18px;
  border: 1px solid #c0c0c0;
}

.frame p {
  margin: 0;
  font-family: "DejaVu Sans", sans-serif;
  font-size: 28px;
  line-height: 46px;
  white-space: nowrap;
}

.scroll {
  flex: none;
  width: 9px;
  padding-top: 3px;
}

.thumb {
  width: 6px;
  height: 67.5%;
  border-radius: 3px;
  background: #999c9e;
}

.sidebar {
  display: flex;
  flex: none;
  width: 56px;
  border-left: 1px solid #5a5c63;
}

.handle {
  align-self: center;
  justify-content: flex-start;
  width: 7px;
  height: 73px;
  background: #8f9196;
}

.decks {
  display: flex;
  flex: 1;
  flex-direction: column;
  align-items: center;
  gap: 14px;
  padding: 6px 9px 0 0;
}

.decks button:first-child {
  margin-bottom: 2px;
}

.status {
  display: flex;
  align-items: center;
  flex: none;
  height: 27px;
  margin: 0 5px 0 4px;
  padding-left: 9px;
  border-top: 1px solid #66676d;
  font-size: 12px;
  white-space: nowrap;
}

.s-page {
  flex: 275;
  margin-left: 14px;
}

.s-words {
  flex: 380;
}

.s-style {
  flex: 418;
}

.s-lang {
  flex: 228;
}

.s-mode {
  width: 22px;
  height: 18px;
  margin-right: 277px;
}

.views {
  display: flex;
  gap: 7px;
  margin-right: 12px;
}

.zoom-btn svg {
  width: 11px;
  height: 11px;
}

.zoom {
  width: 98px;
  height: 12px;
  margin: 0 5px;
  appearance: none;
  background:
    linear-gradient(#77797e, #77797e) 28px 50% / 1px 6px no-repeat,
    linear-gradient(#77797e, #77797e) 0 50% / 100% 2px no-repeat;
}

.zoom::-webkit-slider-thumb {
  width: 10px;
  height: 10px;
  border-radius: 50%;
  appearance: none;
  background: #d0d1d2;
}

.s-zoom {
  width: 39px;
  margin-left: 13px;
}

/* VirtualBox status bar */
.vm-status {
  display: flex;
  align-items: center;
  justify-content: flex-end;
  flex: none;
  gap: 7px;
  height: 47px;
  padding: 0 4px 2px 0;
  border-bottom: 2px solid #50424a;
}

.vm-status svg {
  width: 31px;
  height: 32px;
}

.vm-status span {
  width: 132px;
  color: #fff;
  font-family: "Noto Sans CJK JP", sans-serif;
  font-size: 21px;
  line-height: 32px;
  white-space: nowrap;
}
</style>
